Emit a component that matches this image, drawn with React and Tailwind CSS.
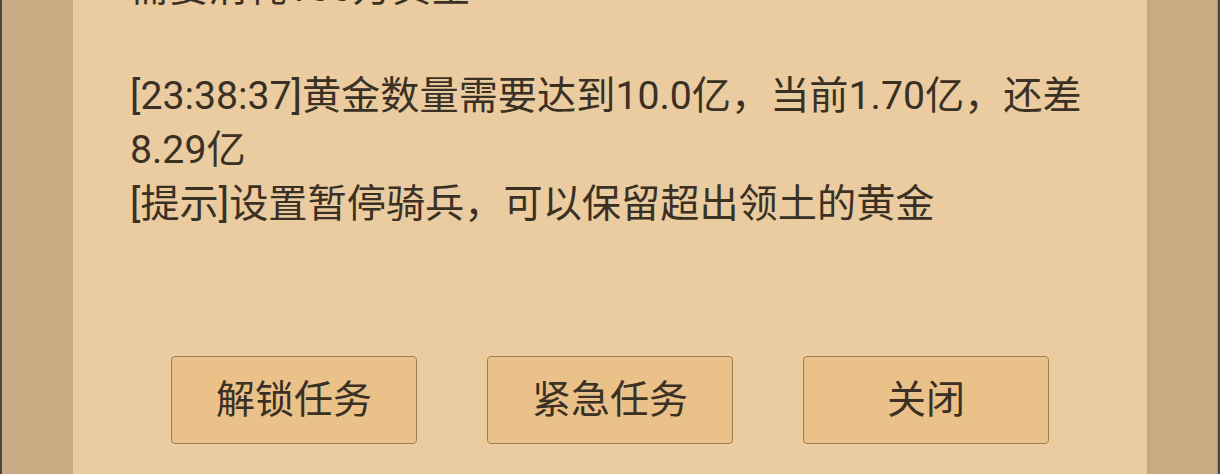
export default function App() {
  const font = { fontFamily: 'Roboto, "Noto Sans CJK SC", "Noto Sans", sans-serif' };
  const buttons = ["解锁任务", "紧急任务", "关闭"];
  return (
    <div
      className="flex h-[474px] w-[1220px] overflow-hidden bg-[#4a4744] text-[#3a3024]"
      style={font}
    >
      <div className="w-[2px] shrink-0 bg-[#4a4744]" />
      <div className="w-[71px] shrink-0 border-l border-[#d2b48e] bg-[#cbab83]" />
      <div className="flex min-w-0 flex-1 flex-col bg-[#eacca0]">
        {/* message log, scrolled so the newest lines are in view */}
        <div className="h-[356px] shrink-0 overflow-hidden px-[57px]">
          <div className="-mt-[39px] text-[39.2px] leading-[54px]">
            <p>需要消耗100万黄金</p>
            <p>&nbsp;</p>
            <p>[23:38:37]黄金数量需要达到10.0亿，当前1.70亿，还差8.29亿</p>
            <p>[提示]设置暂停骑兵，可以保留超出领土的黄金</p>
          </div>
        </div>
        <div className="flex justify-center gap-[70px]">
          {buttons.map((b) => (
            <button
              key={b}
              className="flex h-[88px] w-[246px] items-center justify-center rounded-[4px] border border-[#a27e55] bg-[#eac189] text-[39px] text-[#3a3024]"
              style={font}
            >
              {b}
            </button>
          ))}
        </div>
      </div>
      <div className="w-[70px] shrink-0 border-l-[3px] border-[#c6a67e] bg-[#cbab83]" />
      <div className="w-[1px] shrink-0 bg-[#9a8f85]" />
      <div className="w-[2px] shrink-0 bg-[#4a4744]" />
    </div>
  );
}
